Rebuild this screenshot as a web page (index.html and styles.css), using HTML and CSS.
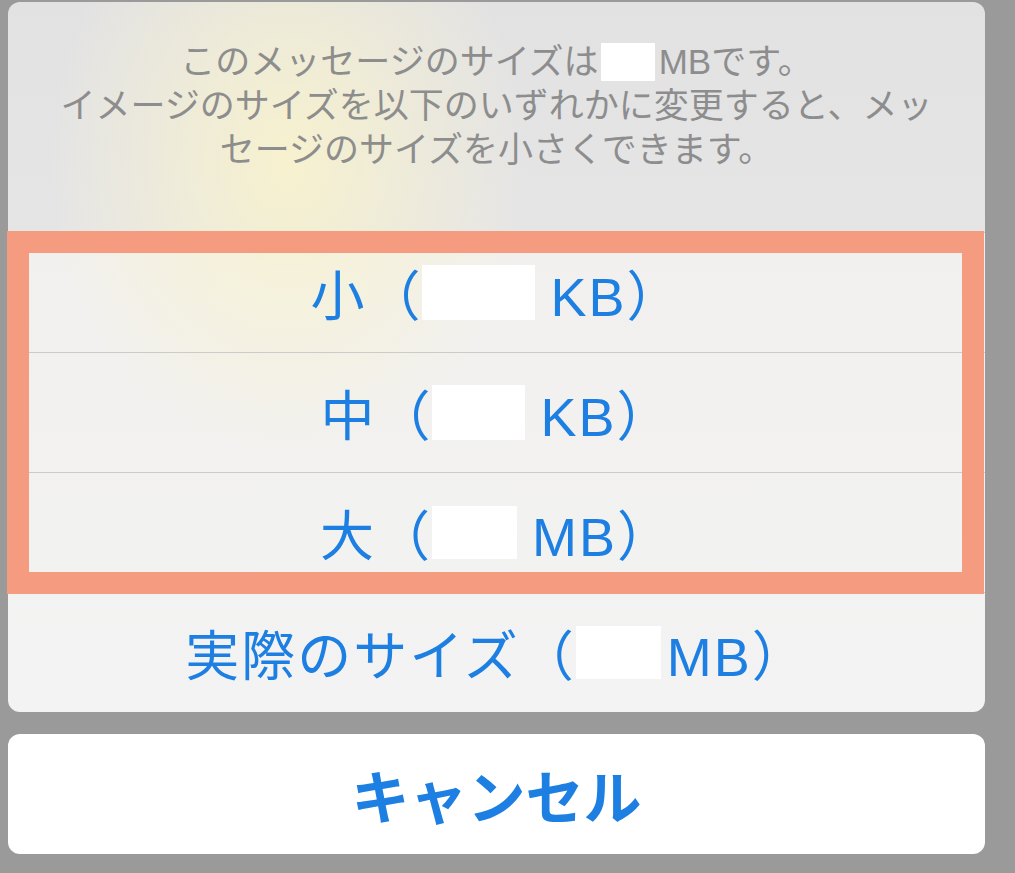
FILE: index.html
```html
<!DOCTYPE html>
<html lang="ja">
<head>
  <meta charset="UTF-8">
  <title>イメージのサイズ</title>
  <link rel="stylesheet" href="styles.css">
</head>
<body>

<div class="screen">
  <div class="sheet">
    <div class="message">
      <p>このメッセージのサイズは<span class="mask mask-head"></span>MBです。<br>イメージのサイズを以下のいずれかに変更すると、メッ<br>セージのサイズを小さくできます。</p>
    </div>
    <div class="option">小（<span class="mask mask-1"></span>KB）</div>
    <div class="option">中（<span class="mask mask-2"></span>KB）</div>
    <div class="option">大（<span class="mask mask-3"></span>MB）</div>
    <div class="option">実際のサイズ（<span class="mask mask-4"></span>MB）</div>
    <div class="highlight"></div>
  </div>
  <div class="cancel">キャンセル</div>
</div>

</body>
</html>
```

FILE: styles.css
```css
body {
  margin: 0;
  background: #9a9a9a;
  font-family: "Liberation Sans", "Noto Sans CJK JP", sans-serif;
}
.screen {
  width: 977px;
  padding: 2px 30px 19px 8px;
}
.sheet {
  position: relative;
  border-radius: 12px;
  background:
    radial-gradient(ellipse 240px 300px at 280px 160px, rgba(248, 242, 205, 0.95), rgba(248, 242, 205, 0) 100%),
    linear-gradient(180deg, #e2e2e3 0, #e5e5e6 230px, #f1f0ee 230px, #f3f3f3 100%);
}
.message {
  height: 230px;
  box-sizing: border-box;
  padding-top: 38px;
  text-align: center;
}
.message p {
  margin: 0;
  font-size: 35px;
  line-height: 44px;
  color: #8d8d8d;
}
.option {
  height: 120px;
  border-top: 1px solid #cbcbcb;
  box-sizing: border-box;
  display: flex;
  align-items: center;
  justify-content: center;
  font-size: 54px;
  letter-spacing: 2px;
  color: #1d7fe2;
}
.option:last-of-type {
  border-radius: 0 0 12px 12px;
}
.mask {
  display: inline-block;
  background: #fff;
  vertical-align: middle;
}
.mask-head {
  width: 54px;
  height: 38px;
  margin: 0 4px 0 2px;
  position: relative;
  top: -3px;
}
.mask-1 { width: 113px; height: 55px; margin-right: 15px; }
.mask-2 { width: 93px; height: 55px; margin-right: 15px; }
.mask-3 { width: 85px; height: 53px; margin-right: 15px; }
.mask-4 { width: 85px; height: 53px; margin-right: 6px; }
.highlight {
  position: absolute;
  left: -1px;
  top: 229px;
  width: 977px;
  height: 363px;
  box-sizing: border-box;
  border: 22px solid #f49b80;
}
.cancel {
  margin-top: 22px;
  height: 120px;
  background: #fff;
  border-radius: 12px;
  display: flex;
  align-items: center;
  justify-content: center;
  font-family: "Noto Sans CJK JP", sans-serif;
  font-size: 58px;
  font-weight: 700;
  color: #1d7fe2;
}
```
